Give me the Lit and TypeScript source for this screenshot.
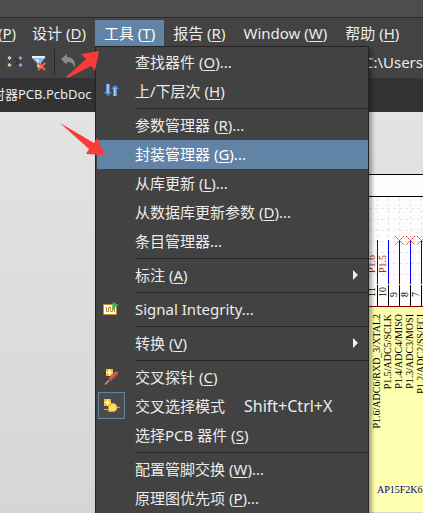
import { LitElement, html, css, svg, nothing } from "lit";
import { customElement } from "lit/decorators.js";

interface Entry {
  label?: string;
  key?: string;
  tail?: string;
  shortcut?: string;
  icon?: string;
  sub?: boolean;
  hot?: boolean;
  sep?: boolean;
}

const SEP: Entry = { sep: true };

const ENTRIES: Entry[] = [
  { label: "查找器件", key: "O", tail: "..." },
  { label: "上/下层次", key: "H", icon: "updown" },
  SEP,
  { label: "参数管理器", key: "R", tail: "..." },
  { label: "封装管理器", key: "G", tail: "...", hot: true },
  { label: "从库更新", key: "L", tail: "..." },
  { label: "从数据库更新参数", key: "D", tail: "..." },
  { label: "条目管理器..." },
  SEP,
  { label: "标注", key: "A", sub: true },
  SEP,
  { label: "Signal Integrity...", icon: "signal" },
  SEP,
  { label: "转换", key: "V", sub: true },
  SEP,
  { label: "交叉探针", key: "C", icon: "probe" },
  { label: "交叉选择模式", shortcut: "Shift+Ctrl+X", icon: "gate" },
  { label: "选择PCB 器件", key: "S" },
  SEP,
  { label: "配置管脚交换", key: "W", tail: "..." },
  { label: "原理图优先项", key: "P", tail: "..." },
];

const TOP = [
  { label: "", key: "P" },
  { label: "设计", key: "D" },
  { label: "工具", key: "T", open: true },
  { label: "报告", key: "R" },
  { label: "Window", key: "W" },
  { label: "帮助", key: "H" },
];

const ICONS: Record<string, unknown> = {
  updown: svg`
    <path d="M3 2h4v8h2l-4 4-4-4h2z" fill="#5c8fd8"/>
    <path d="M4 2h1.500v9H4z" fill="#a9cdf6"/>
    <path d="M10 14h4V7h2l-4-4-4 4h2z" fill="#5c8fd8"/>
    <path d="M11 6h1.500v8H11z" fill="#a9cdf6"/>`,
  signal: svg`
    <path d="M.5 4.500h13v10H.5z" fill="#fffdf4" stroke="#c98a2c"/>
    <path d="M2.500 7.500h1v4h2v-4h2v4h2v-3M11.500 9v3" fill="none" stroke="#b98530"/>
    <path d="M9.500 1.500l2 1.500 4.500 2-3.500 1.500-1 3.500-1.500-.5-1-3 1-2z" fill="#22bd55"/>`,
  probe: svg`
    <path d="M3 1h7v7H3z" fill="#f1b71b"/>
    <path d="M6.500 1v7M3 4.500h7" stroke="#fff6a6" stroke-width="1.500"/>
    <path d="M5 3h3v3H5z" fill="#fffbd0"/>
    <path d="M13.500 5L7.500 11" stroke="#b94a48" stroke-width="4" stroke-linecap="round"/>
    <path d="M13 4.500L7 10.500" stroke="#ee8f88"/>
    <path d="M6 12.500L2 16.500" stroke="#a9a9a9" stroke-width="1.500"/>`,
  gate: svg`
    <path d="M1 12.500h6M13 10.500h4" stroke="#dca52e"/>
    <path d="M5.500 6.500H10c3 0 4 2 4 4s-1 4-4 4H5.500z" fill="#fbdc72" stroke="#dc9f24"/>
    <path d="M1 2h7v7H1z" fill="#f4c02c"/>
    <path d="M4.500 2v7M1 5.500h7" stroke="#fff5a5"/>
    <path d="M3 4h3v3H3z" fill="#fffde0"/>`,
};

@customElement("app-schematic")
class AppSchematic extends LitElement {
  static styles = css`
    :host { display: block; overflow: hidden; }
    svg { display: block; font-family: "Liberation Serif", serif; font-size: 10px; }
    .grid { stroke: #e6e6e6; stroke-dasharray: 3 3; }
    .wire { stroke: #0000ff; }
    .pin { stroke: #000; }
    .net { fill: #a0221a; }
    .part { fill: #000080; }
    .err { stroke: #e01818; stroke-dasharray: 2 1; fill: none; }
  `;

  render() {
    const pins = [
      { n: "11", name: "P1.6/ADC6/RXD_3/XTAL2", net: "P1.6" },
      { n: "10", name: "P1.5/ADC5/SCLK", net: "P1.5" },
      { n: "9", name: "P1.4/ADC4/MISO" },
      { n: "8", name: "P1.3/ADC3/MOSI" },
      { n: "7", name: "P1.2/ADC2/SS/ECI" },
    ];
    return html`<svg width="100%" height="400" aria-label="schematic">
      <rect width="100%" height="338" y="62" fill="#fffdfb" />
      <path d="M0 62.500h2000" stroke="#000" />
      <path d="M0 84.500h2000" stroke="#000" />
      ${[96, 107, 118, 129, 140, 151, 162].map((y) => svg`<path class="grid" d=${`M0 ${y}.5h2000`}/>`)}
      ${pins.map((_, i) => svg`<path class="grid" d=${`M${8 + i * 11}.5 86v106`}/>`)}
      <rect y="194" width="100%" height="206" fill="#ffffb0" />
      <path d="M0 194.500h2000" stroke="#800000" />
      ${pins.map((p, i) => {
        const x = 8 + i * 11;
        return svg`
          <path class="wire" d=${`M${x}.5 128v44`}/>
          <path class="pin" d=${`M${x}.5 173v21`}/>
          <text transform=${`translate(${x - 2} 185) rotate(-90)`}>${p.n}</text>
          ${p.net ? svg`<text class="net" transform=${`translate(${x - 2} 161) rotate(-90)`}>${p.net}</text>` : nothing}
          ${i > 1 ? svg`<path class="err" d=${`M${x - 4} 124l9 9M${x + 5} 124l-9 9`}/>` : nothing}
          <text text-anchor="end" transform=${`translate(${x + 3} 202) rotate(-90)`}>${p.name}</text>`;
      })}
      <text class="part" x="8" y="381">AP15F2K6</text>
    </svg>`;
  }
}

@customElement("app-menu")
class AppMenu extends LitElement {
  static styles = css`
    :host {
      display: block;
      box-sizing: border-box;
      background: #424242;
      border: 1px solid #242424;
      border-bottom: 0;
      padding: 1px 0 0 1px;
      box-shadow: 3px 3px 4px rgba(0, 0, 0, 0.35);
    }
    .item {
      display: grid;
      grid-template-columns: 38px auto 1fr auto;
      align-items: center;
      width: 100%;
      height: 29px;
      padding: 0 10px 2px 0;
      border: 0;
      background: none;
      color: #ececec;
      font: inherit;
      text-align: left;
      white-space: pre;
    }
    .hot { background: #6083a6; color: #fff; }
    .slot { display: grid; place-items: center; width: 27px; height: 27px; box-sizing: border-box; margin-left: 1px; }
    .on { border: 1px solid #6083a6; background: #4b4b4b; }
    .key { text-decoration: underline; text-underline-offset: 2px; }
    .short { padding-left: 19px; font-size: 16px; }
    .arrow { grid-column: 4; width: 0; border: 5px solid transparent; border-left-color: #f0f0f0; border-right: 0; }
    .sep { height: 1px; margin: 2px 0 2px 38px; border: 0; background: #252525; }
  `;

  render() {
    return html`${ENTRIES.map((e) =>
      e.sep
        ? html`<hr class="sep" />`
        : html`<button class="item ${e.hot ? "hot" : ""}">
            <span class="slot ${e.icon === "gate" ? "on" : ""}">
              ${e.icon ? html`<svg width="17" height="17" viewBox="0 0 17 17">${ICONS[e.icon]}</svg>` : nothing}
            </span>
            <span>${e.label}${e.key ? html` (<span class="key">${e.key}</span>)${e.tail}` : nothing}</span>
            ${e.shortcut ? html`<span class="short">${e.shortcut}</span>` : nothing}
            ${e.sub ? html`<span class="arrow"></span>` : nothing}
          </button>`
    )}`;
  }
}

@customElement("app-root")
class AppRoot extends LitElement {
  static styles = css`
    :host {
      display: flex;
      flex-direction: column;
      position: relative;
      min-height: 100vh;
      overflow: hidden;
      background: #434343;
      color: #ececec;
      font: 15px/20px "Noto Sans", "Noto Sans CJK SC", sans-serif;
    }
    .title { height: 17px; background: #4d4d4d; border-bottom: 1px solid #2c2c2c; }
    .bar { display: flex; height: 28px; padding-top: 2px; box-sizing: border-box; white-space: nowrap; }
    .top { flex: none; height: 26px; padding: 0 9px; border: 0; background: none; color: inherit; font: inherit; white-space: pre; }
    .top:first-child { padding: 0 7px 0 0; margin-left: -6px; }
    .open { background: #6083a6; color: #fff; }
    .key { text-decoration: underline; text-underline-offset: 2px; }
    .tools { display: flex; align-items: center; gap: 8px; height: 32px; padding-left: 7px; }
    .tool { padding: 0; border: 0; background: none; display: flex; }
    .rule { width: 1px; height: 26px; margin-right: -2px; background: #292929; }
    .path { margin-left: auto; }
    .tabs { display: flex; align-items: center; height: 34px; background: #333; white-space: nowrap; }
    .tab { border: 0; padding: 0 0 2px; margin-left: -8px; background: none; color: inherit; font: inherit; font-size: 13px; }
    .work { flex: 1; display: flex; background: linear-gradient(#e3e3e3, #d6d6d6); }
    .sheet { margin-left: 369px; flex: 1; min-width: 0; }
    .menu { position: absolute; left: 95px; top: 46px; width: 274px; height: calc(100% - 46px); }
    .marks { position: absolute; left: 56px; top: 46px; pointer-events: none; }
  `;

  render() {
    return html`
      <div class="title"></div>
      <nav class="bar">
        ${TOP.map((t) => html`<button class="top ${t.open ? "open" : ""}">${t.label} (<span class="key">${t.key}</span>)</button>`)}
      </nav>
      <div class="tools">
        <button class="tool" aria-label="Cross select">
          <svg width="17" height="16" viewBox="0 0 17 16">
            <path d="M2.500 2l2 2-2 2-2-2zM2.500 9l2 2-2 2-2-2z" fill="#f8f3a8" />
            <path d="M2 3.500h1v1H2zM2 10.500h1v1H2z" fill="#6a6636" />
            <path d="M8 4l3 3.500L8 11" fill="none" stroke="#222" />
            <path d="M13.500 2l2 2-2 2-2-2zM13.500 9l2 2-2 2-2-2z" fill="#78aef2" />
          </svg>
        </button>
        <button class="tool" aria-label="Clear filter">
          <svg width="14" height="17" viewBox="0 0 14 17">
            <path d="M0 2h13v2L9 9v6l-4-2V9L0 4z" fill="#8bbbe8" />
            <path d="M0 2h13v2H0zM4 5h2l1 3v5H6V9z" fill="#e6f2ff" />
            <path d="M6 9l7 7M13 9l-7 7" stroke="#e56a58" stroke-width="2" />
          </svg>
        </button>
        <span class="rule"></span>
        <button class="tool" aria-label="Undo">
          <svg width="15" height="16" viewBox="0 0 15 16">
            <path d="M0 5l6-5v3c5 0 8 3 8 8l-1 3c0-4-2-6-7-6v3z" fill="#8b8b8b" />
          </svg>
        </button>
        <span class="path">C:\\Users</span>
      </div>
      <div class="tabs"><button class="tab">时器PCB.PcbDoc</button></div>
      <main class="work"><app-schematic class="sheet"></app-schematic></main>
      <app-menu class="menu"></app-menu>
      <svg class="marks" width="52" height="112" viewBox="0 0 52 112" aria-hidden="true">
        <path d="M43 5L25 8l5 5-20 18 2 1 23-12 4 5z" fill="#fb3b37" />
        <path d="M4 77l34 20 3-5 8 17-19-1 3-5z" fill="#fb3b37" />
      </svg>
    `;
  }
}
